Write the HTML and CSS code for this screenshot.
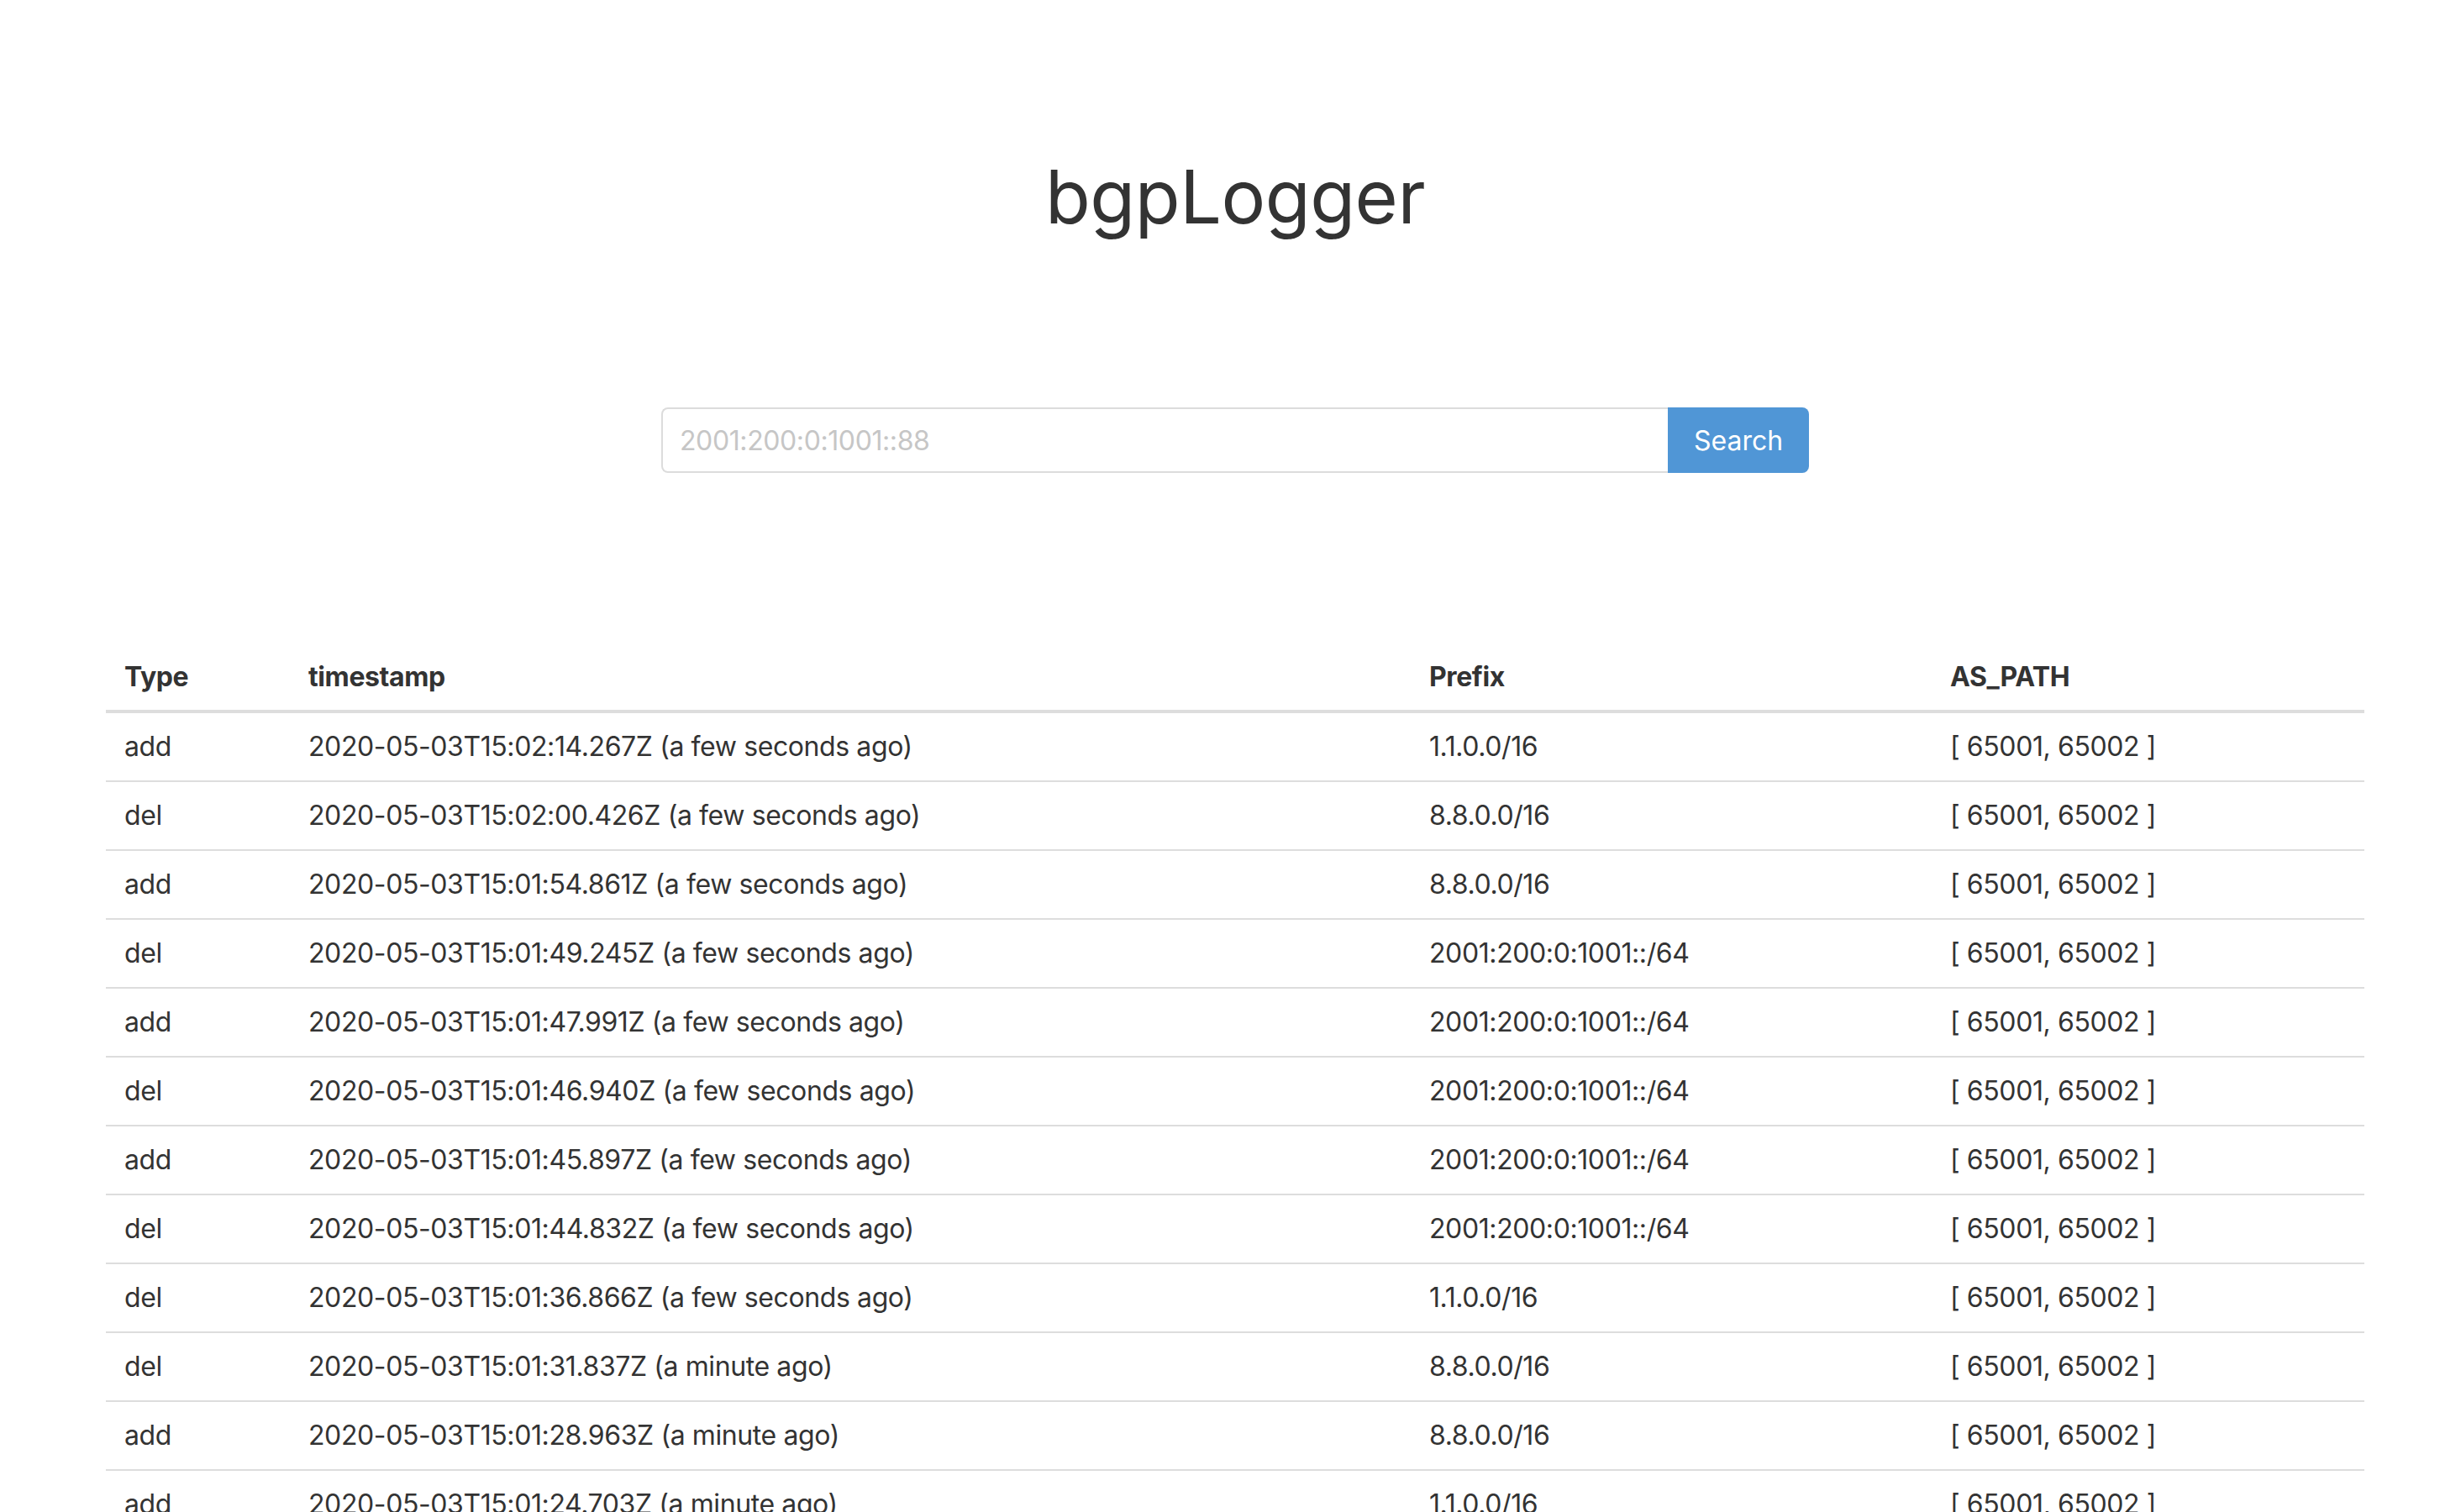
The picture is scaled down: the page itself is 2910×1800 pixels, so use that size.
FILE: index.html
```html
<!DOCTYPE html>
<html lang="en">
<head>
<meta charset="utf-8">
<title>bgpLogger</title>
<link rel="stylesheet" href="styles.css">
</head>
<body>
<div class="page">
  <h1 class="title">bgpLogger</h1>
  <form class="search">
    <input class="search-input" type="text" placeholder="2001:200:0:1001::88">
    <button class="search-btn" type="button">Search</button>
  </form>
  <table class="log">
    <thead>
      <tr>
        <th class="col-type">Type</th>
        <th class="col-ts">timestamp</th>
        <th class="col-prefix">Prefix</th>
        <th class="col-path">AS_PATH</th>
      </tr>
    </thead>
    <tbody>
      <tr><td>add</td><td>2020-05-03T15:02:14.267Z (a few seconds ago)</td><td>1.1.0.0/16</td><td>[ 65001, 65002 ]</td></tr>
      <tr><td>del</td><td>2020-05-03T15:02:00.426Z (a few seconds ago)</td><td>8.8.0.0/16</td><td>[ 65001, 65002 ]</td></tr>
      <tr><td>add</td><td>2020-05-03T15:01:54.861Z (a few seconds ago)</td><td>8.8.0.0/16</td><td>[ 65001, 65002 ]</td></tr>
      <tr><td>del</td><td>2020-05-03T15:01:49.245Z (a few seconds ago)</td><td>2001:200:0:1001::/64</td><td>[ 65001, 65002 ]</td></tr>
      <tr><td>add</td><td>2020-05-03T15:01:47.991Z (a few seconds ago)</td><td>2001:200:0:1001::/64</td><td>[ 65001, 65002 ]</td></tr>
      <tr><td>del</td><td>2020-05-03T15:01:46.940Z (a few seconds ago)</td><td>2001:200:0:1001::/64</td><td>[ 65001, 65002 ]</td></tr>
      <tr><td>add</td><td>2020-05-03T15:01:45.897Z (a few seconds ago)</td><td>2001:200:0:1001::/64</td><td>[ 65001, 65002 ]</td></tr>
      <tr><td>del</td><td>2020-05-03T15:01:44.832Z (a few seconds ago)</td><td>2001:200:0:1001::/64</td><td>[ 65001, 65002 ]</td></tr>
      <tr><td>del</td><td>2020-05-03T15:01:36.866Z (a few seconds ago)</td><td>1.1.0.0/16</td><td>[ 65001, 65002 ]</td></tr>
      <tr><td>del</td><td>2020-05-03T15:01:31.837Z (a minute ago)</td><td>8.8.0.0/16</td><td>[ 65001, 65002 ]</td></tr>
      <tr><td>add</td><td>2020-05-03T15:01:28.963Z (a minute ago)</td><td>8.8.0.0/16</td><td>[ 65001, 65002 ]</td></tr>
      <tr><td>add</td><td>2020-05-03T15:01:24.703Z (a minute ago)</td><td>1.1.0.0/16</td><td>[ 65001, 65002 ]</td></tr>
    </tbody>
  </table>
</div>
</body>
</html>
```
FILE: styles.css
```css
html, body {
  margin: 0;
  padding: 0;
  background: #fff;
}
body {
  font-family: Inter, "Liberation Sans", sans-serif;
  color: #333;
  font-size: 32px;
  letter-spacing: -0.4px;
}
.page {
  padding: 0 96px 0 126px;
}
.title {
  margin: 186px 0 0;
  font-size: 88px;
  line-height: 96px;
  font-weight: 400;
  letter-spacing: -0.5px;
  text-align: center;
  color: #333;
}
.search {
  display: flex;
  width: 1366px;
  margin: 203px auto 0;
  height: 78px;
}
.search-input {
  flex: 1;
  box-sizing: border-box;
  height: 78px;
  border: 2px solid #dcdcdc;
  border-right: none;
  border-radius: 8px 0 0 8px;
  padding: 0 20px;
  font-family: Inter, "Liberation Sans", sans-serif;
  font-size: 32px;
  letter-spacing: -0.4px;
  color: #555;
  outline: none;
}
.search-input::placeholder {
  color: #c6c6c6;
}
.search-btn {
  width: 168px;
  height: 78px;
  border: none;
  border-radius: 0 8px 8px 0;
  background: #5096d6;
  color: #fff;
  font-family: Inter, "Liberation Sans", sans-serif;
  font-size: 32px;
  letter-spacing: 0;
  padding: 0;
}
.log {
  width: 100%;
  margin-top: 210px;
  border-collapse: collapse;
  table-layout: fixed;
}
.log th {
  text-align: left;
  font-weight: 700;
  line-height: 40px;
  padding: 13px 21px 19px 22px;
  border-bottom: 4px solid #dddddd;
}
.log td {
  line-height: 40px;
  padding: 20px 21px 20px 22px;
  border-bottom: 2px solid #dddddd;
  white-space: nowrap;
}
.col-type { width: 176px; }
.col-ts { width: 1291px; }
.col-prefix { width: 577px; }
.col-path { width: auto; }
```
